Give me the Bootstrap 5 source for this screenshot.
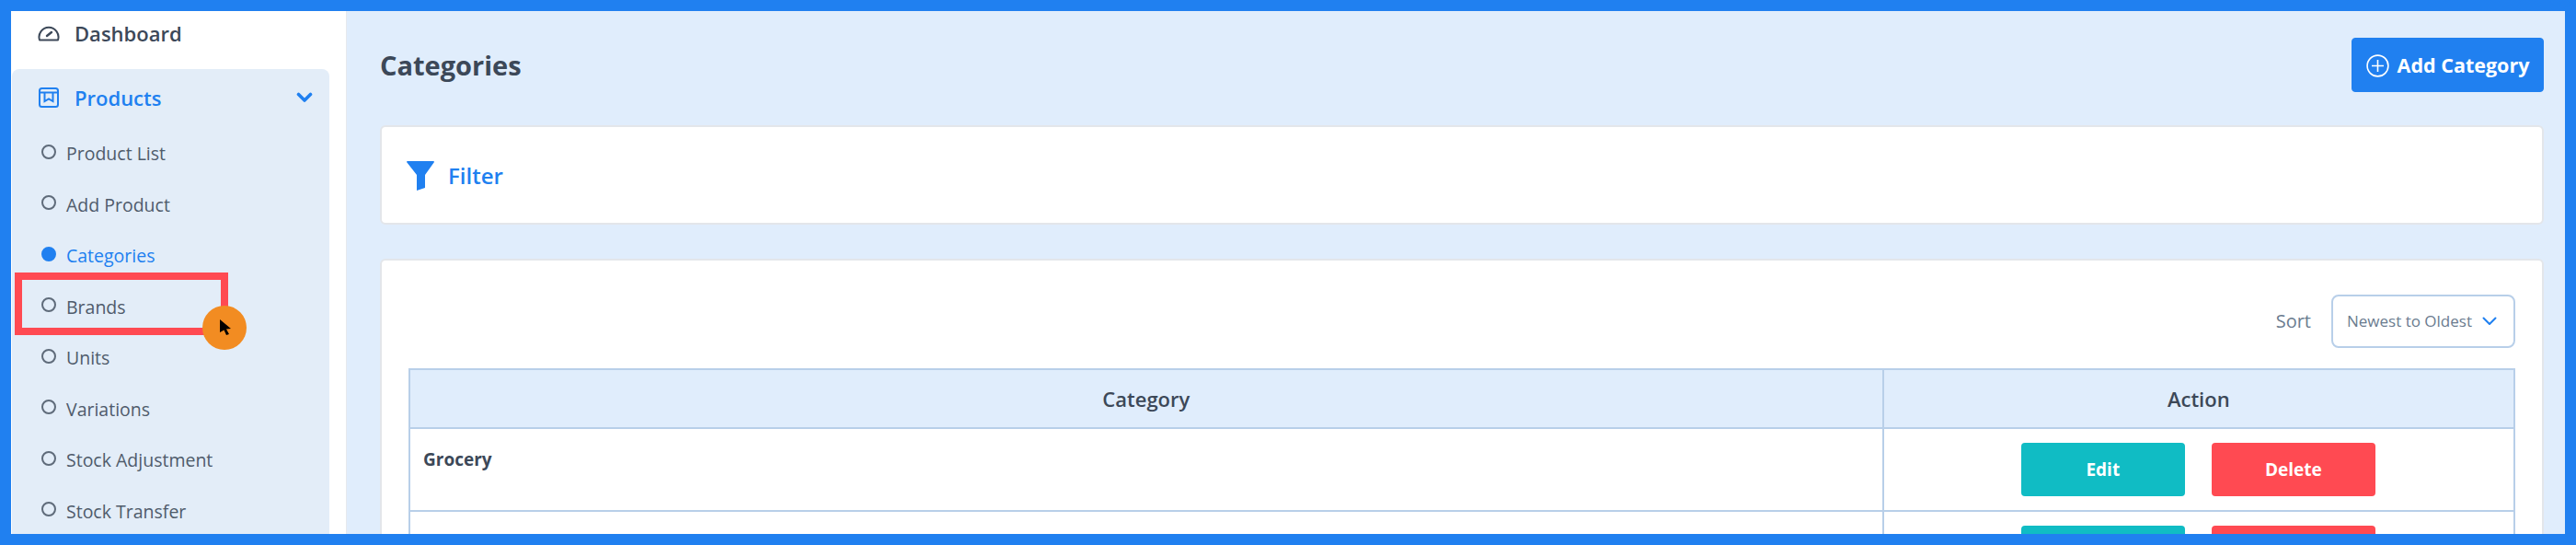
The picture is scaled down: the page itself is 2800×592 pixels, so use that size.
<!doctype html>
<html lang="en">
<head>
<meta charset="utf-8">
<title>Categories</title>
<link href="https://cdn.jsdelivr.net/npm/bootstrap@5.3.0/dist/css/bootstrap.min.css" rel="stylesheet">
<style>
html,body{height:100%;margin:0}
body{font-family:"Open Sans","Noto Sans",sans-serif;color:#3c4858;overflow:hidden;background:#fff}
.frame-wrap{height:592px;border:12px solid #2080f0;display:flex;overflow:hidden;position:relative}
.side-pane{width:365px;flex:none;background:#fff;border-right:1px solid #e6e9ee;padding-left:1px}
.dash-link{height:63px;display:flex;align-items:center;padding-left:28px;font-size:22px;font-weight:600;color:#3c4858;padding-bottom:15px;gap:16px;text-decoration:none}
.prod-panel{width:345px;height:540px;background:#e3edf8;border-radius:8px}
.prod-head{height:62px;display:flex;align-items:center;padding:0 18px 0 28px;gap:16px;color:#2080f0;font-size:22px;font-weight:600}
.sub-nav{padding:2px 0 0 27px;margin:0;list-style:none}
.sub-nav li{height:55.5px;display:flex;align-items:center;gap:11px;font-size:19.5px;color:#4f5b6b;line-height:1}
.ring{width:16px;height:16px;border:2px solid #5f6b7a;border-radius:50%;flex:none;position:relative;top:-2px;margin-left:5px}
.sub-nav li.on{color:#2080f0}
.sub-nav li.on .ring{background:#2080f0;border-color:#2080f0}
.main-pane{flex:1;min-width:0;background:#e0edfc;padding:29px 23px 0 36px;display:flex;flex-direction:column}
.head-row{height:59px;margin-bottom:36px;flex:none}
.head-row h1{font-size:29px;font-weight:700;color:#3c4858;margin:2px 0 0}
.add-btn{width:209px;height:59px;background:#2080f0;border:1px solid #2080f0;border-radius:4px;color:#fff;font-size:21.5px;font-weight:700;display:flex;align-items:center;justify-content:center;gap:9px;padding:2px 0 0}
.add-btn:hover{background:#2080f0;color:#fff}
.filter-box{height:108px;flex:none;background:#fff;border:2px solid #e3e6ea;border-radius:6px;margin-bottom:37px;display:flex;align-items:center;padding:1px 0 0 27px;gap:15px;color:#2080f0;font-size:24px;font-weight:600}
.list-box{background:#fff;border:2px solid #e3e6ea;border-radius:6px;padding:36px 29px 0;flex:none;height:320px}
.sort-row{height:60px;margin-bottom:21px;display:flex;justify-content:flex-end;align-items:center;gap:22px;color:#6b7c8f;font-size:20px}
.sort-pick{width:200px;height:58px;border:2px solid #b8cfe9;border-radius:8px;display:flex;align-items:center;justify-content:space-between;padding:0 18px 0 15px;font-size:17px;color:#6b7c8f;background:#fff}
.cat-table{width:100%;border-collapse:collapse;table-layout:fixed;margin:0}
.cat-table th,.cat-table td{border:2px solid #b8cfe9;padding:0}
.cat-table thead th{background:#e0edfc;height:64px;text-align:center;vertical-align:middle;font-size:22px;font-weight:600;color:#3c4858}
.cat-table td{height:90px;vertical-align:top}
.cat-name{font-size:19px;font-weight:700;padding:20px 14px 0;color:#3c4858;line-height:1.4}
.act-wrap{display:flex;justify-content:center;gap:29px;padding-top:15px;padding-right:1px}
.act-btn{width:178px;height:58px;border:0;border-radius:4px;color:#fff;font-size:19px;font-weight:700;display:flex;align-items:center;justify-content:center;padding:0}
.act-edit,.act-edit:hover{background:#10bcc4;color:#fff}
.act-del,.act-del:hover{background:#ff4a52;color:#fff}
.mark-box{position:absolute;left:4px;top:284px;width:232px;height:68px;border:8px solid #ff4a52;pointer-events:none}
.mark-dot{position:absolute;left:208px;top:320px;width:48px;height:48px;border-radius:50%;background:#f28c22}
.mark-dot svg{position:absolute;left:19px;top:15px}
</style>
</head>
<body>
<div class="frame-wrap">
  <aside class="side-pane">
    <a class="dash-link" href="#">
      <svg width="24" height="20" viewBox="0 0 24 20" fill="none" stroke="#3c4858" stroke-width="2" stroke-linecap="round"><path d="M2 17.5a10.5 10.5 0 1 1 20 0z" stroke-linejoin="round"/><path d="M10 13l5-4" stroke-width="2.4"/></svg>
      <span>Dashboard</span>
    </a>
    <div class="prod-panel">
      <div class="prod-head">
        <svg width="24" height="24" viewBox="0 0 24 24" fill="none" stroke="#2080f0" stroke-width="2"><rect x="2" y="2" width="20" height="20" rx="2.5"/><path d="M2 6.500h20"/><path d="M7.500 7v9l4.500-2.500 4.500 2.500V7"/></svg>
        <span class="flex-grow-1">Products</span>
        <svg width="18" height="12" viewBox="0 0 18 12" fill="none" stroke="#2080f0" stroke-width="3.6" stroke-linecap="round" stroke-linejoin="round"><path d="M2.500 2.500L9 9l6.500-6.500"/></svg>
      </div>
      <ul class="sub-nav">
        <li><span class="ring"></span>Product List</li>
        <li><span class="ring"></span>Add Product</li>
        <li class="on"><span class="ring"></span>Categories</li>
        <li><span class="ring"></span>Brands</li>
        <li><span class="ring"></span>Units</li>
        <li><span class="ring"></span>Variations</li>
        <li><span class="ring"></span>Stock Adjustment</li>
        <li><span class="ring"></span>Stock Transfer</li>
      </ul>
    </div>
  </aside>
  <main class="main-pane">
    <div class="head-row d-flex justify-content-between align-items-center">
      <h1>Categories</h1>
      <button class="btn add-btn" type="button">
        <svg width="25" height="25" viewBox="0 0 25 25" fill="none" stroke="#fff" stroke-width="1.600"><circle cx="12.500" cy="12.500" r="11.400"/><path d="M12.500 6v13M6 12.500h13"/></svg>
        <span>Add Category</span>
      </button>
    </div>
    <div class="filter-box">
      <svg width="30" height="32" viewBox="0 0 30 32"><path d="M0 1q0-1 1-1h28q1 0 1 1L20 15v14l-9 3V15z" fill="#2080f0"/></svg>
      <span>Filter</span>
    </div>
    <div class="list-box">
      <div class="sort-row">
        <span>Sort</span>
        <div class="sort-pick">
          <span>Newest to Oldest</span>
          <svg width="16" height="10" viewBox="0 0 16 10" fill="none" stroke="#2080f0" stroke-width="2" stroke-linecap="round" stroke-linejoin="round"><path d="M1.500 1.500L8 8l6.500-6.500"/></svg>
        </div>
      </div>
      <table class="cat-table">
        <colgroup><col style="width:70%"><col></colgroup>
        <thead><tr><th>Category</th><th>Action</th></tr></thead>
        <tbody>
          <tr><td><div class="cat-name">Grocery</div></td><td><div class="act-wrap"><button class="btn act-btn act-edit">Edit</button><button class="btn act-btn act-del">Delete</button></div></td></tr>
          <tr><td><div class="cat-name">Household</div></td><td><div class="act-wrap"><button class="btn act-btn act-edit">Edit</button><button class="btn act-btn act-del">Delete</button></div></td></tr>
        </tbody>
      </table>
    </div>
  </main>
  <div class="mark-box"></div>
  <div class="mark-dot"><svg width="13" height="17" viewBox="0 0 13 17"><path d="M0 0l12 10-5 .5 3 5.500-3 1-2.500-5.500L0 14z" fill="#000"/></svg></div>
</div>
<script src="https://cdn.jsdelivr.net/npm/bootstrap@5.3.0/dist/js/bootstrap.bundle.min.js"></script>
</body>
</html>
